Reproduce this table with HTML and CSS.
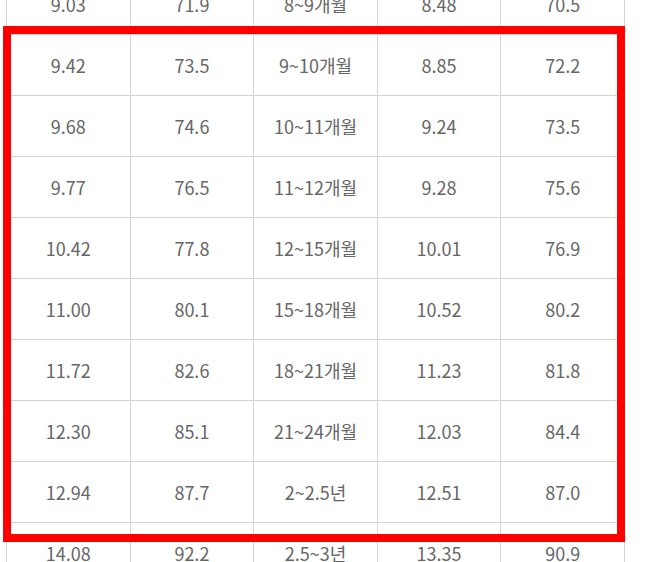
FILE: index.html
```html
<!DOCTYPE html>
<html lang="ko">
<head>
<meta charset="utf-8">
<title>성장표</title>
<link rel="stylesheet" href="styles.css">
</head>
<body>
<div class="page">
<table class="growth">
<tbody>
<tr><td>9.03</td><td>71.9</td><td>8~9개월</td><td>8.48</td><td>70.5</td></tr>
<tr><td>9.42</td><td>73.5</td><td>9~10개월</td><td>8.85</td><td>72.2</td></tr>
<tr><td>9.68</td><td>74.6</td><td>10~11개월</td><td>9.24</td><td>73.5</td></tr>
<tr><td>9.77</td><td>76.5</td><td>11~12개월</td><td>9.28</td><td>75.6</td></tr>
<tr><td>10.42</td><td>77.8</td><td>12~15개월</td><td>10.01</td><td>76.9</td></tr>
<tr><td>11.00</td><td>80.1</td><td>15~18개월</td><td>10.52</td><td>80.2</td></tr>
<tr><td>11.72</td><td>82.6</td><td>18~21개월</td><td>11.23</td><td>81.8</td></tr>
<tr><td>12.30</td><td>85.1</td><td>21~24개월</td><td>12.03</td><td>84.4</td></tr>
<tr><td>12.94</td><td>87.7</td><td>2~2.5년</td><td>12.51</td><td>87.0</td></tr>
<tr><td>14.08</td><td>92.2</td><td>2.5~3년</td><td>13.35</td><td>90.9</td></tr>
</tbody>
</table>
<div class="highlight"></div>
</div>
</body>
</html>
```
FILE: styles.css
```css
html, body {
  margin: 0;
  padding: 0;
  background: #ffffff;
}
.page {
  position: relative;
  width: 672px;
  height: 562px;
  overflow: hidden;
}
.growth {
  border-collapse: collapse;
  table-layout: fixed;
  width: 619px;
  margin: -27px 0 0 6px;
  font-family: "Noto Sans CJK KR", "Noto Sans", sans-serif;
  font-size: 18px;
  color: #666666;
}
.growth td {
  border: 1px solid #d4d4d4;
  height: 60px;
  padding: 0;
  text-align: center;
  vertical-align: middle;
  line-height: 20px;
}
.highlight {
  position: absolute;
  left: 3px;
  top: 26px;
  width: 606px;
  height: 500px;
  border: 8px solid #ff0000;
}
```
